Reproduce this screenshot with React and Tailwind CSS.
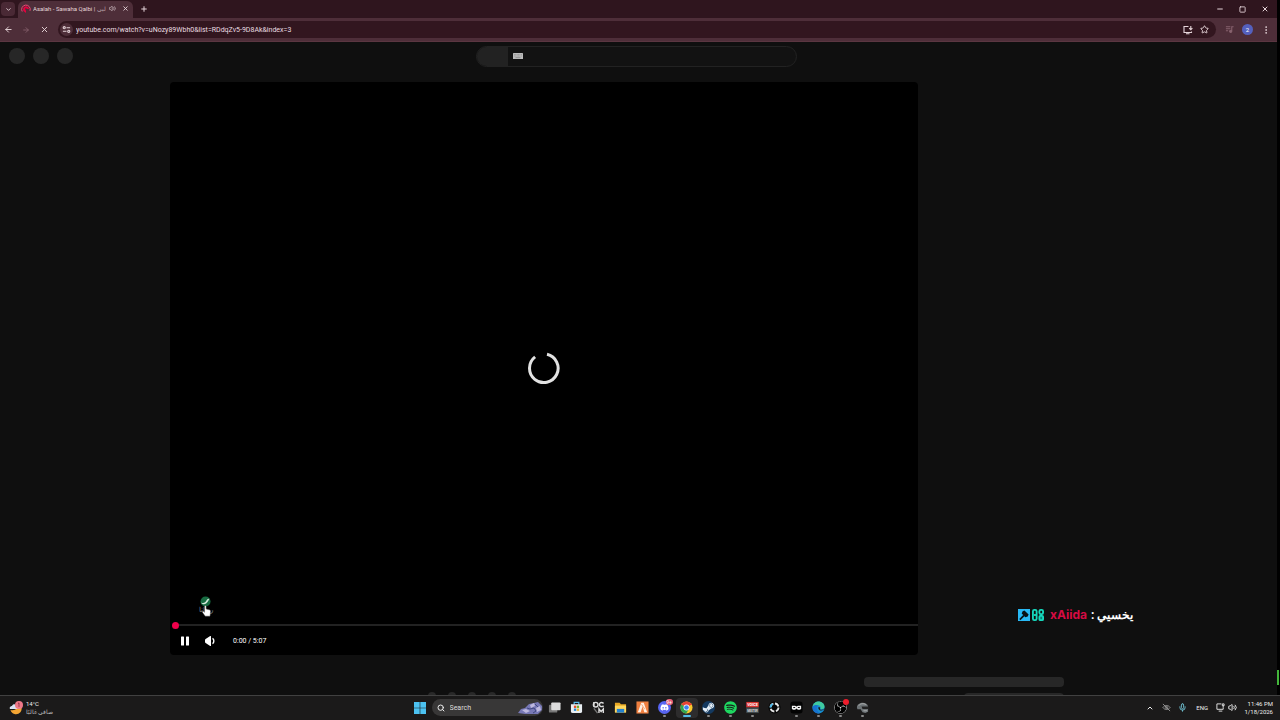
import React from "react";
import {
  ArrowLeft,
  ArrowRight,
  ChevronDown,
  ChevronUp,
  EllipsisVertical,
  Mic,
  Minus,
  Plus,
  Search,
  Square,
  Star,
  Volume2,
  X,
} from "lucide-react";
import { FaDiscord, FaSpotify, FaSteamSymbol } from "react-icons/fa";
import { SiObsstudio } from "react-icons/si";

const TabStrip = () => (
  <div className="flex h-[18px] items-center bg-[#2f151e] text-[#e6d5da]">
    <button aria-label="Search tabs" className="ml-px flex h-[14px] w-[14px] items-center justify-center rounded bg-[#4a2935]">
      <ChevronDown size={7} strokeWidth={3} />
    </button>
    <div className="ml-[3px] mt-px flex h-[17px] w-[115px] items-center rounded-t-md bg-[#4e2e39] pb-[2px] pl-[3px] pr-1">
      <svg viewBox="0 0 10 10" className="h-[10px] w-[10px] shrink-0">
        <path d="M1.200 7.500A4.300 4.300 0 1 1 9 6.800" fill="none" stroke="#f04776" strokeWidth="1" />
        <path d="M2.500 7A3 3 0 1 1 8 5L5 5v4z" fill="#e6003f" />
        <path d="M4.300 4v2.500L6.500 5z" fill="#4e2e39" />
      </svg>
      <span className="ml-[2px] flex w-[74px] overflow-hidden whitespace-nowrap text-[6px] leading-[10px]">
        Asalah - Sawaha Qalbi |&nbsp;<bdi className="text-[#b59ea6]">لبي</bdi>
      </span>
      <button aria-label="Mute tab" className="ml-[2px] shrink-0">
        <Volume2 size={7} />
      </button>
      <button aria-label="Close tab" className="ml-auto shrink-0">
        <X size={7} strokeWidth={3} />
      </button>
    </div>
    <button aria-label="New tab" className="ml-[5px] p-[2px]">
      <Plus size={8} strokeWidth={3} />
    </button>
    <div className="ml-auto flex items-center gap-[15px] pr-[8px]">
      <button aria-label="Minimize"><Minus size={8} strokeWidth={3} /></button>
      <button aria-label="Maximize"><Square size={7} strokeWidth={3} /></button>
      <button aria-label="Close"><X size={8} strokeWidth={3} /></button>
    </div>
  </div>
);

const Toolbar = () => (
  <div className="flex h-6 items-center border-b border-[#5b3641] bg-[#4e2e39] pl-1 pr-[6px] text-[#e6d5da]">
    <div className="flex w-[54px] items-center gap-2">
      <button aria-label="Back" className="w-[10px]"><ArrowLeft size={9} strokeWidth={2.5} /></button>
      <button aria-label="Forward" className="w-[10px] text-[#87626e]"><ArrowRight size={8} strokeWidth={2.5} /></button>
      <button aria-label="Stop" className="w-[10px]"><X size={9} strokeWidth={2.5} /></button>
    </div>
    <div className="flex h-[17px] flex-1 items-center rounded-full bg-[#32161f] pl-[2px] pr-[7px]">
      <button aria-label="Site information" className="flex h-[13px] w-[13px] items-center justify-center rounded-full bg-[#4e2e39]">
        <svg viewBox="0 0 10 10" className="h-[9px] w-[9px]" fill="none" stroke="currentColor" strokeWidth="1.2">
          <circle cx="2.5" cy="3" r="1.2" />
          <path d="M5 3h4M1 7h4" />
          <circle cx="7.5" cy="7" r="1.2" />
        </svg>
      </button>
      <input
        aria-label="Address"
        className="ml-[3px] min-w-0 flex-1 bg-transparent text-[7px] leading-[10px] text-[#eadde1] outline-none"
        defaultValue="youtube.com/watch?v=uNozy89Wbh0&list=RDdqZv5-9D8Ak&index=3"
      />
      <button aria-label="Install app">
        <svg viewBox="0 0 10 10" className="h-[10px] w-[10px]" fill="none" stroke="currentColor" strokeWidth="1.100">
          <path d="M5.500 1.500H1v6h7.500V6.500M3 8.700h3.500M7.800 1v3.500M6.200 3.200l1.600 1.600 1.600-1.600" />
        </svg>
      </button>
      <button aria-label="Bookmark" className="ml-[7px]"><Star size={9} strokeWidth={2.5} /></button>
    </div>
    <button aria-label="Media controls" className="ml-[9px] text-[#87626e]">
      <svg viewBox="0 0 10 10" className="h-[9px] w-[9px]" fill="none" stroke="currentColor" strokeWidth="1.200">
        <path d="M1 2h5M1 4.200h5M1 6.400h2.500M9.500 2H7.500v5" />
        <circle cx="6.300" cy="7" r="1.200" fill="currentColor" />
      </svg>
    </button>
    <button aria-label="Profile" className="ml-[8px] flex h-[11px] w-[11px] items-center justify-center rounded-full bg-[#5460bd] text-[6px] leading-none text-white">
      2
    </button>
    <button aria-label="Menu" className="ml-[8px]"><EllipsisVertical size={10} strokeWidth={2} /></button>
  </div>
);

const Masthead = () => (
  <header className="grid h-7 grid-cols-[1fr_321px_1fr] items-center pr-1">
    <div className="flex gap-2 pl-[9px]">
      {[0, 1, 2].map((i) => (
        <div key={i} className="h-4 w-4 rounded-full bg-[#272727]" />
      ))}
    </div>
    <div className="flex h-[21px] items-center overflow-hidden rounded-full border border-[#222] bg-[#121212]">
      <div className="h-full w-[31px] bg-[#222]" />
      <svg viewBox="0 0 10 6" className="ml-[5px] h-[6px] w-[10px]">
        <rect width="10" height="6" rx=".5" fill="#bbb" />
        <path d="M1 1.5h8M1 3h8" stroke="#777" strokeWidth=".6" strokeDasharray=".7 .7" />
        <path d="M2.5 4.6h5" stroke="#777" strokeWidth=".6" />
      </svg>
    </div>
  </header>
);

const Player = () => (
  <section className="flex min-w-0 flex-1 flex-col rounded bg-black">
    <div className="flex flex-1 items-center justify-center pt-[58px]">
      <svg viewBox="0 0 34 34" className="h-[34px] w-[34px]" fill="none" stroke="#e2e2e2" strokeWidth="3">
        <path d="M20 3.3A14.3 14.3 0 1 1 8.1 5.9" />
      </svg>
    </div>
    <div className="relative ml-[24px] flex w-[23px] flex-col items-center">
      <svg viewBox="0 0 12 12" className="h-[11px] w-[11px]">
        <circle cx="6" cy="6" r="5.5" fill="#176b41" />
        <path d="M1 7c3 1.500 5 0 6-2s2-2 3.500-2C9.500 4 9 6 7 7.800S2.500 9.300 1 7z" fill="#d5e8dc" />
      </svg>
      <span className="text-[7px] leading-[7px] text-[#888]" dir="rtl">روتانا</span>
      <svg viewBox="0 0 14 18" className="absolute left-[8px] top-[9px] h-[12px] w-[9px]">
        <path
          d="M4 1.500c0-1.500 2.500-1.500 2.500 0V6l5 1.200c1.500.4 2 1.300 1.800 2.800L12.500 17H5L.8 11.200C0 10 1.500 8.800 2.700 9.800L4 11z"
          fill="#fff"
          stroke="#333"
          strokeWidth=".6"
        />
      </svg>
    </div>
    <div className="mt-[7px] flex h-2 items-center pl-[2px]">
      <div className="h-[7px] w-[7px] rounded-full bg-[#f0004b]" />
      <div className="h-[2px] flex-1 bg-[#222]" />
    </div>
    <div className="flex h-6 items-center pl-[10px] text-white">
      <button aria-label="Pause">
        <svg viewBox="0 0 10 10" className="h-[10px] w-[10px]" fill="currentColor">
          <rect x="1" y=".5" width="3" height="9" rx=".5" />
          <rect x="6" y=".5" width="3" height="9" rx=".5" />
        </svg>
      </button>
      <button aria-label="Mute" className="ml-[14px]">
        <svg viewBox="0 0 12 12" className="h-[12px] w-[12px]" fill="currentColor">
          <path d="M1 5.200Q1 4 2 3.800L6.200 1Q7 .6 7 1.500v9Q7 11.400 6.200 11L2 8.200Q1 8 1 6.800z" />
          <path d="M8.500 3.300c1.800 1 1.800 4.400 0 5.400" fill="none" stroke="currentColor" strokeWidth="1.400" />
        </svg>
      </button>
      <span className="ml-[17px] text-[7px] leading-[10px]">0:00 / 5:07</span>
    </div>
    <div className="h-[2px]" />
  </section>
);

const ChatMessage = () => (
  <div className="flex h-4 items-center whitespace-nowrap text-[12px] font-bold leading-4">
    <svg viewBox="0 0 13 13" className="h-[12px] w-[12px]">
      <rect width="13" height="13" fill="#28b9f5" />
      <path d="M2 11.500 6.500 7" stroke="#0a1116" strokeWidth="1.800" />
      <path d="M5 2.500l2-1 4.500 4.500-1 2-2.500 1-4-4z" fill="#0a1116" />
    </svg>
    <svg viewBox="0 0 13 13" className="ml-[2px] h-[12px] w-[12px]" fill="none" stroke="#16d9bd" strokeWidth="2">
      <rect x="1" y="1" width="4" height="11" rx="1.500" />
      <path d="M2 6.500h3" />
      <rect x="8" y="1" width="4" height="4.500" rx="1.500" />
      <rect x="8" y="7.500" width="4" height="4.500" rx="1" fill="#087f75" />
    </svg>
    <span className="ml-[6px] font-['Inter','Roboto',sans-serif] text-[#d50b43]">xAiida</span>
    <span className="ml-1 text-white">:</span>
    <span className="ml-[3px] text-white" dir="rtl">يخسيي</span>
  </div>
);

const PageFooter = () => (
  <div className="flex h-10 items-start overflow-hidden">
    <div className="flex flex-1 gap-3 pl-[428px] pt-[37px]">
      {[0, 1, 2, 3, 4].map((i) => (
        <div key={i} className="h-2 w-2 shrink-0 rounded-full bg-[#292929]" />
      ))}
    </div>
    <div className="mr-[213px] mt-[22px] flex w-[200px] flex-col items-end gap-[6px]">
      <div className="h-[10px] w-full rounded-sm bg-[#272727]" />
      <div className="h-[10px] w-1/2 rounded-sm bg-[#272727]" />
    </div>
  </div>
);

const FileExplorer = () => (
  <svg viewBox="0 0 14 14">
    <path d="M1 2h5l1.500 1.500H13V12H1z" fill="#e9a824" />
    <path d="M1 5h12v7.500H1z" fill="#ffd75e" />
    <path d="M3 8.500h8v4H3z" fill="#2481cf" />
  </svg>
);

const apps = [
  {
    name: "Task view",
    icon: (
      <svg viewBox="0 0 14 14">
        <rect x="1" y="4" width="9" height="8.500" rx="1" fill="#777" />
        <rect x="3.500" y="1.500" width="10" height="8.500" rx="1" fill="#dcdcdc" />
      </svg>
    ),
  },
  {
    name: "Microsoft Store",
    icon: (
      <svg viewBox="0 0 14 14">
        <path d="M4.500 4V1.500h5V4" fill="none" stroke="#58b9e9" strokeWidth="1.300" />
        <path d="M1 3.500h12V11a2 2 0 0 1-2 2H3a2 2 0 0 1-2-2z" fill="#e9eff3" />
        <path d="M4.200 5h2.500v2.500H4.200z" fill="#e74b2b" />
        <path d="M7.300 5h2.500v2.500H7.300z" fill="#70ad2e" />
        <path d="M4.200 8.100h2.500v2.500H4.200z" fill="#2089d4" />
        <path d="M7.300 8.100h2.500v2.500H7.300z" fill="#efb52d" />
      </svg>
    ),
  },
  {
    name: "Game launcher",
    icon: (
      <svg viewBox="0 0 14 14" fill="none" stroke="#ddd" strokeWidth="1.500">
        <circle cx="4" cy="4" r="2.500" />
        <path d="M2 1v5M12.500 2.500C10 .8 8 2 8 4s2.500 2.800 4.500 1.300" />
        <path d="M7.500 13V8.500l2.300 3 2.400-3V13" />
        <path d="m2 8 4 5" stroke="#777" />
      </svg>
    ),
  },
  { name: "File Explorer", icon: <FileExplorer /> },
  {
    name: "FiveM",
    icon: (
      <svg viewBox="0 0 14 14">
        <rect x=".5" y=".5" width="13" height="13" fill="#f08040" />
        <path d="M2 12 5.700 2h2.600L12 12H9L7 6l-2 6z" fill="#fff0e4" />
        <path d="M6 3.500 9.500 9" stroke="#f08040" strokeWidth=".7" />
      </svg>
    ),
  },
  { name: "Discord", running: true, badge: true, icon: <FaDiscord className="rounded-full bg-[#5865f2] p-[2px] text-white" /> },
  {
    name: "Google Chrome",
    active: true,
    icon: (
      <svg viewBox="0 0 14 14">
        <circle cx="7" cy="7" r="6.500" fill="#f7c82d" />
        <path d="M7 7 1.400 3.700A6.500 6.500 0 0 1 12.600 3.700z" fill="#e74335" />
        <path d="M7 7 1.400 3.700A6.500 6.500 0 0 0 6.700 13.500L9.600 8.500z" fill="#30a553" />
        <path d="M7 4h6a6.500 6.500 0 0 0-.5-.8z" fill="#e74335" />
        <circle cx="7" cy="7" r="3.200" fill="#fff" />
        <circle cx="7" cy="7" r="2.500" fill="#3f80ed" />
      </svg>
    ),
  },
  {
    name: "Steam",
    running: true,
    icon: <FaSteamSymbol className="rounded-full bg-[#14395f] text-[#e4eef6]" />,
  },
  { name: "Spotify", running: true, icon: <FaSpotify className="text-[#1ed760]" /> },
  {
    name: "Voicemeeter",
    running: true,
    icon: (
      <svg viewBox="0 0 14 14">
        <rect x=".3" y="1" width="13.400" height="6" fill="#d93531" />
        <rect x=".3" y="7" width="13.400" height="6" fill="#414b4e" />
        <text x="7" y="5.500" textAnchor="middle" fontSize="4" fontWeight="700" fill="#fff">VOICE</text>
        <text x="7" y="11.500" textAnchor="middle" fontSize="3" fontWeight="700" fill="#ddd">MEETER</text>
      </svg>
    ),
  },
  {
    name: "Logitech G HUB",
    icon: (
      <svg viewBox="0 0 14 14" fill="none" strokeWidth="2">
        <circle cx="7" cy="7" r="6.500" fill="#050505" />
        <circle cx="7" cy="7" r="4.300" stroke="#e5e5e5" strokeDasharray="5 1.750" />
        <path d="M2.700 7A4.300 4.300 0 0 1 5 3.200" stroke="#42b8ee" />
      </svg>
    ),
  },
  {
    name: "Masked app",
    running: true,
    icon: (
      <svg viewBox="0 0 14 14">
        <rect x=".5" y=".5" width="13" height="13" rx="3" fill="#030303" />
        <path d="M2 5h3.500l1.500 1 1.500-1H12v3.500l-1.500 1H8.500L7 8l-1.500 1.500h-2L2 8.500z" fill="#f2f2f2" />
        <path d="M3.500 7h2M8.500 7h2" stroke="#111" strokeWidth="1.200" />
      </svg>
    ),
  },
  {
    name: "Microsoft Edge",
    running: true,
    icon: (
      <svg viewBox="0 0 14 14">
        <circle cx="7" cy="7" r="6.500" fill="#168dd0" />
        <path d="M.6 6.500C1 2.500 4 .5 7 .5c4 0 6.500 3 6.500 5.500 0 2.500-2.500 3.500-4.500 2.700.8-1 .5-4-3-4C3.500 4.700 1.500 5.500.6 6.500z" fill="#3fca9f" />
        <path d="M.6 6.500C2 4 5 4 6.500 5c-2.500 1.500-1.500 6.500 2.500 8C4 14.500 0 11 .6 6.500z" fill="#1872cf" />
        <path d="M7.200 6.500c-1 1.500.3 3.800 2.800 3.800 1.500 0 2.500-.7 3.500-1.300-2.500.8-4.500.6-5-.5.500-.5.500-2-1.300-2z" fill="#1b1a1a" />
      </svg>
    ),
  },
  { name: "OBS Studio", running: true, recording: true, icon: <SiObsstudio className="rounded-full bg-black text-[#ddd]" /> },
  {
    name: "Helmet",
    running: true,
    icon: (
      <svg viewBox="0 0 14 14">
        <path d="M1 7C1 1 12 0 13 6v5.500L10 13l-3-1-2-3H1.500z" fill="#6d7376" />
        <path d="M6 6h7v2.500H7z" fill="#222" />
        <path d="M3 5c1-2 5-3 8-1M8 10.500h4" fill="none" stroke="#bbb" strokeWidth=".8" />
      </svg>
    ),
  },
];

const AppButton = ({ app }) => (
  <button
    aria-label={app.name}
    className={`relative flex h-5 w-[22px] flex-col items-center justify-end gap-px rounded-sm pb-px ${app.active ? "bg-[#2d2c2d]" : ""}`}
  >
    <span className="h-[13px] w-[13px] [&>svg]:h-full [&>svg]:w-full">{app.icon}</span>
    <span
      className={`h-[2px] rounded-full ${app.active ? "w-2 bg-[#52b9e8]" : app.running ? "w-[3px] bg-[#888]" : "w-[3px]"}`}
    />
    {app.badge && (
      <span className="absolute right-[3px] top-px h-[6px] w-[7px] rounded-full bg-[#e9607a] text-center text-[5px] leading-[6px] text-white">9+</span>
    )}
    {app.recording && <span className="absolute right-[3px] top-px h-[6px] w-[6px] rounded-full bg-[#ee1c2b]" />}
  </button>
);

const Taskbar = () => (
  <footer className="grid h-[25px] grid-cols-[1fr_auto_1fr] items-center border-t border-[#414141] bg-[#1b1a1a] pb-px text-[#eee]">
    <button className="flex items-center gap-[3px] pl-[9px] text-left">
      <svg viewBox="0 0 14 14" className="h-[14px] w-[14px]">
        <path d="M12.500 6c1 5-3 8-7 7-2-.5-3.500-2-4-4C7 10 9 7 8.500 2z" fill="#f4a533" />
        <path d="M1 8c-1-2 1-3 2-3 1-3 5-2 5 1 2 0 2 2 0 2z" fill="#d9e4f5" />
        <circle cx="10" cy="4" r="4" fill="#ed7889" />
        <path d="M9 2.500l1-.6v4" fill="none" stroke="#852b43" strokeWidth=".8" />
      </svg>
      <span className="flex flex-col text-[6px] leading-[8px]">
        <span>14°C</span>
        <span dir="rtl" className="text-[#bbb]">صافي غالبًا</span>
      </span>
    </button>
    <div className="flex items-center pl-[2px]">
      <button aria-label="Start" className="flex h-5 w-[22px] items-center justify-center">
        <svg viewBox="0 0 12 12" className="h-3 w-3" fill="#4cc2f1">
          <path d="M0 0h5.700v5.700H0zM6.300 0H12v5.700H6.300zM0 6.300h5.700V12H0zM6.300 6.300H12V12H6.300z" />
        </svg>
      </button>
      <label className="mx-px flex h-[17px] w-[111px] items-center overflow-hidden rounded-full bg-[#383737] pl-[5px]">
        <Search size={8} strokeWidth={3} />
        <input
          type="search"
          aria-label="Search"
          placeholder="Search"
          className="ml-[5px] w-[60px] bg-transparent text-[7px] leading-[10px] outline-none placeholder:text-[#ddd]"
        />
        <svg viewBox="0 0 26 14" className="ml-auto h-[14px] w-[26px]">
          <path d="M1 12 4 8l4-1 4-4 5-1 4-1 4 4v4l-4 4H8z" fill="#7778b5" />
          <path d="m5 9 4-1 4 2-4 2zM13 4l4-2 1 3-4 2zM19 7l4-2 1 4-4 2z" fill="#bdb9df" />
          <path d="m10 7 3 1 4-1 2 3-3 2M18 3l3 3" fill="none" stroke="#414780" />
        </svg>
      </label>
      {apps.map((app) => (
        <AppButton key={app.name} app={app} />
      ))}
    </div>
    <div className="flex items-center justify-end pr-[7px]">
      <button aria-label="Show hidden icons"><ChevronUp size={8} strokeWidth={3} /></button>
      <svg viewBox="0 0 10 10" className="ml-[8px] h-[9px] w-[9px]" fill="none" stroke="#999" strokeWidth="1">
        <path d="M1 5c2-3 6-3 8 0-2 3-6 3-8 0zM1 1l8 8" />
        <circle cx="5" cy="5" r="1.300" />
      </svg>
      <Mic size={9} strokeWidth={2.5} className="ml-[7px] text-[#70bfd0]" />
      <span className="ml-[9px] text-[6px] leading-[8px]">ENG</span>
      <svg viewBox="0 0 10 10" className="ml-[8px] h-[9px] w-[9px]" fill="none" stroke="currentColor" strokeWidth="1">
        <path d="M6 1H1v6h7V5M3 9h4M7 1h2v2H7zM8 3v2" />
      </svg>
      <Volume2 size={9} strokeWidth={2.5} className="ml-[3px]" />
      <button className="ml-[7px] w-[29px] whitespace-nowrap text-right text-[6px] leading-[8px]">
        11:46 PM
        <br />
        1/18/2026
      </button>
    </div>
  </footer>
);

const App = () => (
  <div className="flex h-screen flex-col overflow-hidden bg-[#0f0f0f] font-['Roboto','Noto_Sans',sans-serif] antialiased">
    <div className="flex min-h-0 flex-1">
      <div className="flex min-w-0 flex-1 flex-col">
        <TabStrip />
        <Toolbar />
        <Masthead />
        <main className="mt-3 flex min-h-0 flex-1 pl-[170px]">
          <Player />
          <aside className="flex w-[359px] flex-col justify-end pb-8 pl-[100px]">
            <ChatMessage />
          </aside>
        </main>
        <PageFooter />
      </div>
      <div className="flex w-[3px] flex-col justify-end bg-black pb-[10px]">
        <div className="h-[15px] w-[2px] bg-[#43b63a]" />
      </div>
    </div>
    <Taskbar />
  </div>
);

export default App;
